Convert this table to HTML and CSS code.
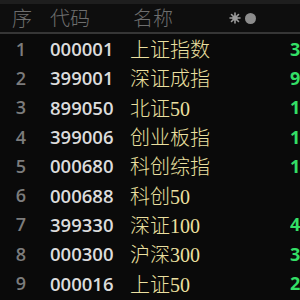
FILE: index.html
```html
<!DOCTYPE html>
<html>
<head>
<meta charset="utf-8">
<link rel="stylesheet" href="styles.css">
</head>
<body>
<div class="screen">
  <div class="topbar"></div>
  <div class="header">
    <span class="h-seq">序</span>
    <span class="h-code">代码</span>
    <span class="h-name">名称</span>
    <span class="h-icons">
      <svg class="ic-star" width="12" height="12" viewBox="0 0 12 12"><g stroke="#9a9a9a" stroke-width="1.6" stroke-linecap="round"><line x1="6" y1="1" x2="6" y2="11"/><line x1="1" y1="6" x2="11" y2="6"/><line x1="2.5" y1="2.5" x2="9.5" y2="9.5"/><line x1="9.5" y1="2.5" x2="2.5" y2="9.5"/></g><circle cx="6" cy="6" r="2.6" fill="#9a9a9a"/></svg>
      <span class="ic-dot"></span>
    </span>
  </div>
  <div class="sep"></div>
  <div class="rows">
    <div class="row"><span class="seq">1</span><span class="code">000001</span><span class="name">上证指数</span><span class="val">3</span></div>
    <div class="row"><span class="seq">2</span><span class="code">399001</span><span class="name">深证成指</span><span class="val">9</span></div>
    <div class="row"><span class="seq">3</span><span class="code">899050</span><span class="name">北证50</span><span class="val">1</span></div>
    <div class="row"><span class="seq">4</span><span class="code">399006</span><span class="name">创业板指</span><span class="val">1</span></div>
    <div class="row"><span class="seq">5</span><span class="code">000680</span><span class="name">科创综指</span><span class="val">1</span></div>
    <div class="row"><span class="seq">6</span><span class="code">000688</span><span class="name">科创50</span><span class="val"></span></div>
    <div class="row"><span class="seq">7</span><span class="code">399330</span><span class="name">深证100</span><span class="val">4</span></div>
    <div class="row"><span class="seq">8</span><span class="code">000300</span><span class="name">沪深300</span><span class="val">3</span></div>
    <div class="row"><span class="seq">9</span><span class="code">000016</span><span class="name">上证50</span><span class="val">2</span></div>
  </div>
</div>
</body>
</html>
```
FILE: styles.css
```css
html, body {
  margin: 0;
  padding: 0;
  background: #0a0a0a;
}
.screen {
  width: 300px;
  height: 300px;
  overflow: hidden;
  background: #0a0a0a;
}
.topbar {
  height: 4px;
  background: #1e1e1e;
}
.header {
  height: 28px;
  display: grid;
  grid-template-columns: 50px 83px 96px 71px;
  align-items: center;
  background: #0e0e0e;
  color: #6e6e6e;
  font-family: "Noto Sans CJK SC", sans-serif;
  font-weight: 300;
  font-size: 20px;
  line-height: 28px;
}
.h-seq {
  padding-left: 12px;
}
.h-icons {
  display: flex;
  align-items: center;
  gap: 4px;
}
.ic-dot {
  width: 11px;
  height: 11px;
  border-radius: 50%;
  background: #8c8c8c;
}
.sep {
  height: 2px;
  background: #363636;
}
.rows {
  display: flex;
  flex-direction: column;
}
.row {
  height: 29.3px;
  display: grid;
  grid-template-columns: 42px 8px 80px 160px 10px;
  align-items: center;
  white-space: nowrap;
}
.seq {
  grid-column: 1;
  text-align: center;
  color: #7c7c7c;
  font-family: "Open Sans", sans-serif;
  font-weight: 600;
  font-size: 18px;
}
.code {
  grid-column: 3;
  color: #dcdcdc;
  font-family: "Open Sans", sans-serif;
  font-weight: 600;
  font-size: 18.5px;
}
.name {
  grid-column: 4;
  color: #ece0a0;
  font-family: "Liberation Serif", "Noto Sans CJK SC", serif;
  font-weight: 300;
  font-size: 20px;
}
.val {
  grid-column: 5;
  color: #33df66;
  font-family: "Open Sans", sans-serif;
  font-weight: 700;
  font-size: 18px;
  overflow: hidden;
}
```
